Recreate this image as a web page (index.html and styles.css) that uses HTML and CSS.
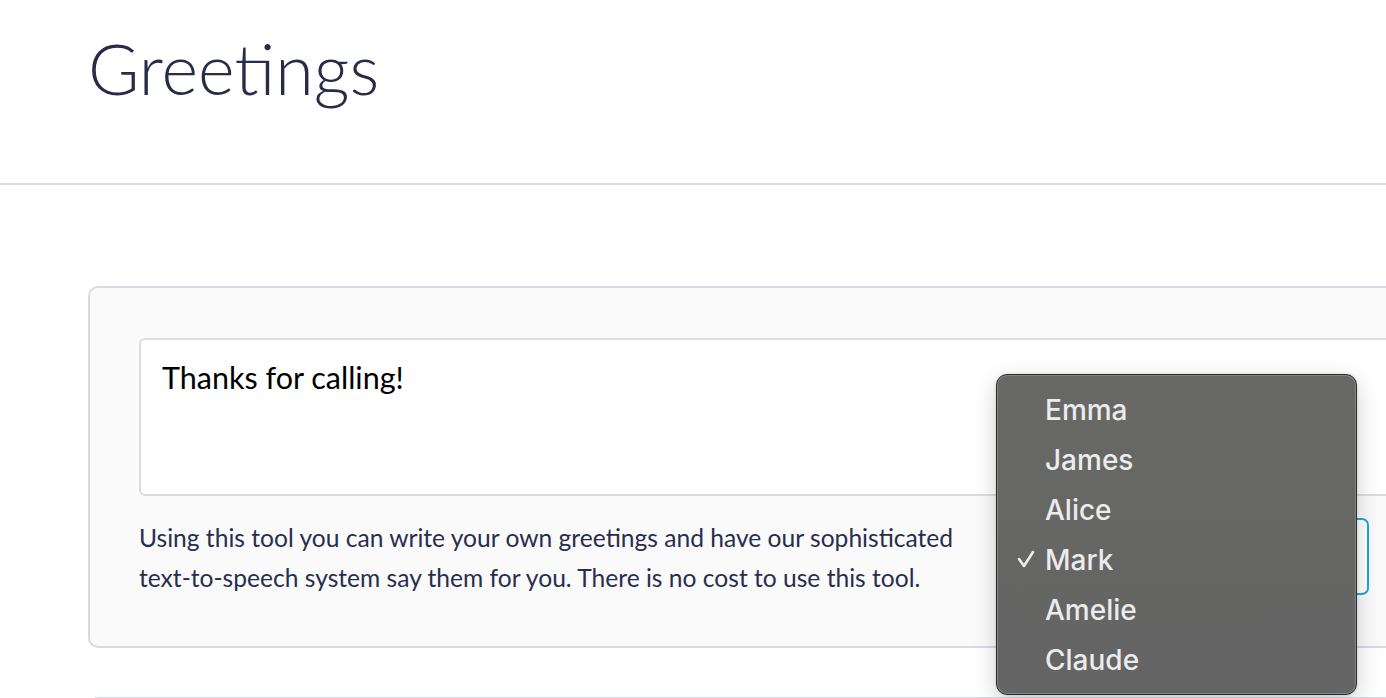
FILE: index.html
```html
<!DOCTYPE html>
<html lang="en">
<head>
<meta charset="utf-8">
<title>Greetings</title>
<link rel="stylesheet" href="styles.css">
</head>
<body>
  <header class="page-header">
    <h1 class="page-title">Greetings</h1>
  </header>
  <main class="content">
    <section class="card">
      <textarea class="greeting-input">Thanks for calling!</textarea>
      <div class="card-footer">
        <p class="help-text">Using this tool you can write your own greetings and have our sophisticated text-to-speech system say them for you. There is no cost to use this tool.</p>
        <div class="voice-select" aria-label="Voice: Mark"></div>
      </div>
    </section>
    <section class="card card-next"></section>
  </main>
  <ul class="voice-menu">
    <li class="voice-item">Emma</li>
    <li class="voice-item">James</li>
    <li class="voice-item">Alice</li>
    <li class="voice-item is-selected"><svg class="check" width="18" height="18" viewBox="0 0 18 18"><polyline points="2,9 7,16 16,2" fill="none" stroke="#ececec" stroke-width="2.6" stroke-linecap="round" stroke-linejoin="round"/></svg>Mark</li>
    <li class="voice-item">Amelie</li>
    <li class="voice-item">Claude</li>
  </ul>
</body>
</html>
```

FILE: styles.css
```css
html, body {
  margin: 0;
  padding: 0;
  overflow: hidden;
  background: #ffffff;
}

body {
  font-family: "Lato", "Liberation Sans", sans-serif;
  color: #282e4f;
  position: relative;
  width: 1386px;
  height: 698px;
}

.page-header {
  height: 185px;
  border-bottom: 2px solid #dadde9;
  padding-left: 88px;
  box-sizing: border-box;
}

.page-title {
  margin: 0;
  padding-top: 23px;
  font-family: "Lato", sans-serif;
  font-weight: 300;
  font-size: 70px;
  line-height: 90px;
  color: #262c4a;
}

.content {
  padding: 101px 0 0 88px;
  width: 1600px;
}

.card {
  width: 1420px;
  box-sizing: border-box;
  border: 2px solid #d7d9e7;
  border-radius: 10px;
  background: #fafafa;
  padding: 50px 49px 48px 49px;
}

.card-next {
  margin-top: 49px;
  height: 120px;
}

.greeting-input {
  display: block;
  width: 100%;
  height: 158px;
  box-sizing: border-box;
  border: 2px solid #dcdcdc;
  border-radius: 6px;
  background: #ffffff;
  padding: 19px 21px;
  font-family: "Lato", sans-serif;
  font-size: 30.5px;
  line-height: 36px;
  color: #000000;
  resize: none;
  outline: none;
}

.card-footer {
  display: flex;
  gap: 50px;
  margin-top: 22px;
  align-items: flex-start;
}

.help-text {
  margin: 0;
  width: 840px;
  font-size: 24.6px;
  line-height: 40px;
  color: #282e4f;
}

.voice-select {
  width: 340px;
  height: 77px;
  box-sizing: border-box;
  border: 2px solid #1ea6dc;
  border-radius: 7px;
  background: #ffffff;
}

.voice-menu {
  position: absolute;
  left: 996px;
  top: 374px;
  width: 361px;
  height: 321px;
  box-sizing: border-box;
  margin: 0;
  padding: 10px 0 0 0;
  list-style: none;
  background: linear-gradient(#686866, #646464);
  border: 1px solid #2b2b2b;
  border-radius: 11px;
  box-shadow: inset 0 0 0 1px #858585, 0 8px 24px rgba(0, 0, 0, 0.18), 0 0 3px rgba(0, 0, 0, 0.15);
}

.voice-item {
  position: relative;
  height: 50px;
  display: flex;
  align-items: center;
  padding-left: 48px;
  font-family: "Inter", "Liberation Sans", sans-serif;
  font-size: 28px;
  font-weight: 500;
  color: #ececec;
}

.check {
  position: absolute;
  left: 20px;
  top: 15px;
}
```
